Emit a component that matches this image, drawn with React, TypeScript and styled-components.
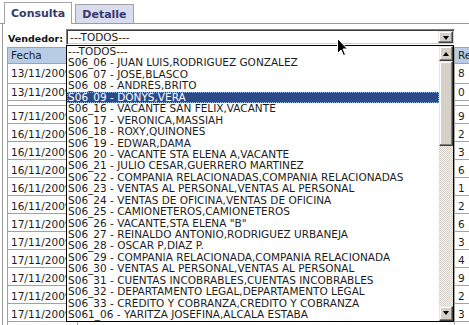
import React from "react";
import styled, { createGlobalStyle, css } from "styled-components";

const GlobalStyle = createGlobalStyle`
  html, body {
    margin: 0;
    padding: 0;
    background: #fff;
  }
  body {
    font-family: "DejaVu Sans", Verdana, sans-serif;
    color: #1a1a1a;
  }
`;

const Page = styled.div`
  position: relative;
  width: 469px;
  height: 325px;
  overflow: hidden;
  background: #fff;
`;

const TabBar = styled.div`
  display: flex;
  align-items: flex-end;
  gap: 3px;
  height: 23px;
  padding-left: 4px;
  border-bottom: 1px solid #9a9a9a;
  box-sizing: content-box;
`;

const Tab = styled.div<{ $active?: boolean }>`
  display: flex;
  align-items: center;
  padding: 0 6px;
  font-size: 11px;
  font-weight: bold;
  color: #36396f;
  border: 1px solid #a4a4a4;
  border-bottom: none;
  ${(p) =>
    p.$active
      ? css`
          height: 21px;
          margin-bottom: -1px;
          background: #fff;
        `
      : css`
          height: 18px;
          background: #d9dcec;
        `}
`;

const Panel = styled.div`
  margin-left: 2px;
  border-left: 1px solid #9a9a9a;
  padding: 5px 0 0 4px;
  height: 300px;
`;

const FilterRow = styled.div`
  display: flex;
  align-items: flex-end;
  gap: 3px;
  height: 16px;
  margin-bottom: 2px;
`;

const Label = styled.span`
  margin-left: 1px;
  font-size: 9.5px;
  font-weight: bold;
  color: #111;
  line-height: 13px;
`;

const SelectWrap = styled.div`
  position: relative;
  width: 389px;
  height: 16px;
`;

const SelectBox = styled.div`
  box-sizing: border-box;
  display: flex;
  align-items: center;
  height: 16px;
  border: 1px solid;
  border-color: #808080 #fff #fff #808080;
  box-shadow: inset 1px 1px #404040, inset -1px -1px #d4d0c8;
  padding: 0 1px 0 3px;
  font-size: 10.5px;
  background: #fff;
`;

const SelectText = styled.span`
  flex: 1;
`;

const raised = css`
  box-sizing: border-box;
  background: #d4d0c8;
  border: 1px solid;
  border-color: #e8e6e1 #404040 #404040 #e8e6e1;
  box-shadow: inset -1px -1px #808080, inset 1px 1px #fff;
`;

const Arrow = styled.span<{ $up?: boolean }>`
  width: 0;
  height: 0;
  border-left: 3.5px solid transparent;
  border-right: 3.5px solid transparent;
  ${(p) =>
    p.$up
      ? css`border-bottom: 4px solid #000;`
      : css`border-top: 4px solid #000;`}
`;

const DropButton = styled.div`
  ${raised};
  display: flex;
  align-items: center;
  justify-content: center;
  width: 15px;
  height: 12px;
  padding-top: 1px;
`;

const DropList = styled.div`
  position: absolute;
  left: 0;
  top: 16px;
  width: 388px;
  box-sizing: border-box;
  border: 1px solid #000;
  background: #fff;
  display: flex;
  z-index: 5;
`;

const Options = styled.div`
  flex: 1;
`;

const Option = styled.div<{ $selected?: boolean }>`
  height: 11.44px;
  line-height: 11.44px;
  padding-left: 1px;
  font-size: 10.5px;
  white-space: nowrap;
  overflow: hidden;
  color: #1c1c1c;
  ${(p) =>
    p.$selected &&
    css`
      background: #2d4a88;
      color: #fff;
      outline: 1px dotted #8fb4ec;
      outline-offset: -1px;
    `}
`;

const ScrollBar = styled.div`
  width: 14px;
  display: flex;
  flex-direction: column;
  background-color: #f2f1ee;
  background-image: conic-gradient(
    #d4d0c8 25%,
    #f4f3f0 0 50%,
    #d4d0c8 0 75%,
    #f4f3f0 0
  );
  background-size: 2px 2px;
`;

const ScrollButton = styled.div`
  ${raised};
  height: 15px;
  display: flex;
  align-items: center;
  justify-content: center;
`;

const Thumb = styled.div`
  ${raised};
  height: 85px;
`;

const Track = styled.div`
  flex: 1;
`;

const Grid = styled.table`
  border-collapse: separate;
  border-spacing: 0;
  table-layout: fixed;
  width: 507px;
  border-top: 1px solid #a2a2a2;
  border-left: 1px solid #a2a2a2;
  font-size: 10.5px;
`;

const HeadCell = styled.th`
  background: #b8cce6;
  font-weight: normal;
  text-align: left;
  color: #222;
  line-height: 15px;
  padding: 0 3px;
  border-right: 1px solid #a2a2a2;
  border-bottom: 1px solid #a2a2a2;
  white-space: nowrap;
  overflow: hidden;
`;

const Cell = styled.td<{ $pt: number; $pb: number }>`
  line-height: 14px;
  padding: ${(p) => `${p.$pt}px 2px ${p.$pb}px 3px`};
  border-right: 1px solid #a2a2a2;
  border-bottom: 1px solid #a2a2a2;
  white-space: nowrap;
  overflow: hidden;
  color: #1c1c1c;
`;

const SpacerCell = styled.td`
  height: 4px;
  padding: 0;
  line-height: 0;
  font-size: 0;
  border-right: 1px solid #a2a2a2;
  border-bottom: 1px solid #a2a2a2;
`;

const Cursor = styled.svg`
  position: absolute;
  left: 337px;
  top: 38px;
  z-index: 10;
`;

const options = [
  "---TODOS---",
  "S06_06 - JUAN LUIS,RODRIGUEZ GONZALEZ",
  "S06_07 - JOSE,BLASCO",
  "S06_08 - ANDRÉS,BRITO",
  "S06_09 - DONYS,VERA",
  "S06_16 - VACANTE SAN FELIX,VACANTE",
  "S06_17 - VERONICA,MASSIAH",
  "S06_18 - ROXY,QUIÑONES",
  "S06_19 - EDWAR,DAMA",
  "S06_20 - VACANTE STA ELENA A,VACANTE",
  "S06_21 - JULIO CESAR,GUERRERO MARTINEZ",
  "S06_22 - COMPAÑIA RELACIONADAS,COMPAÑIA RELACIONADAS",
  "S06_23 - VENTAS AL PERSONAL,VENTAS AL PERSONAL",
  "S06_24 - VENTAS DE OFICINA,VENTAS DE OFICINA",
  "S06_25 - CAMIONETEROS,CAMIONETEROS",
  'S06_26 - VACANTE,STA ELENA "B"',
  "S06_27 - REINALDO ANTONIO,RODRIGUEZ URBANEJA",
  "S06_28 - OSCAR P,DIAZ P.",
  "S06_29 - COMPAÑIA RELACIONADA,COMPAÑIA RELACIONADA",
  "S06_30 - VENTAS AL PERSONAL,VENTAS AL PERSONAL",
  "S06_31 - CUENTAS INCOBRABLES,CUENTAS INCOBRABLES",
  "S06_32 - DEPARTAMENTO LEGAL,DEPARTAMENTO LEGAL",
  "S06_33 - CRÉDITO Y COBRANZA,CRÉDITO Y COBRANZA",
  "S061_06 - YARITZA JOSEFINA,ALCALA ESTABA",
];

// the middle columns sit under the open drop-down, so they are left blank
type Row = { fecha: string; total: string; pt: number; pb: number };

const rows: Row[] = [
  { fecha: "13/11/2009", total: "8", pt: 2, pb: 3 },
  { fecha: "13/11/2009", total: "0", pt: 1, pb: 1 },
];

const laterRows: Row[] = [
  ["17/11/2009", "9"],
  ["16/11/2009", "2"],
  ["16/11/2009", "3"],
  ["16/11/2009", "6"],
  ["16/11/2009", "1"],
  ["16/11/2009", "2"],
  ["17/11/2009", "6"],
  ["17/11/2009", "3"],
  ["17/11/2009", "4"],
  ["17/11/2009", "9"],
  ["17/11/2009", "2"],
  ["17/11/2009", "3"],
  ["17/11/2009", "5"],
].map(([fecha, total]) => ({ fecha, total, pt: 3, pb: 0 }));

const DataRow: React.FC<{ row: Row }> = ({ row }) => (
  <tr>
    <Cell $pt={row.pt} $pb={row.pb}>{row.fecha}</Cell>
    <Cell $pt={row.pt} $pb={row.pb} />
    <Cell $pt={row.pt} $pb={row.pb}>{row.total}</Cell>
  </tr>
);

const App: React.FC = () => {
  return (
    <Page>
      <GlobalStyle />
      <TabBar>
        <Tab $active>Consulta</Tab>
        <Tab>Detalle</Tab>
      </TabBar>
      <Panel>
        <FilterRow>
          <Label>Vendedor:</Label>
          <SelectWrap>
            <SelectBox>
              <SelectText>---TODOS---</SelectText>
              <DropButton>
                <Arrow />
              </DropButton>
            </SelectBox>
            <DropList>
              <Options>
                {options.map((o, i) => (
                  <Option key={o} $selected={i === 4}>
                    {o}
                  </Option>
                ))}
              </Options>
              <ScrollBar>
                <ScrollButton>
                  <Arrow $up />
                </ScrollButton>
                <Thumb />
                <Track />
                <ScrollButton>
                  <Arrow />
                </ScrollButton>
              </ScrollBar>
            </DropList>
          </SelectWrap>
        </FilterRow>
        <Grid>
          <colgroup>
            <col style={{ width: 70 }} />
            <col style={{ width: 377 }} />
            <col style={{ width: 60 }} />
          </colgroup>
          <thead>
            <tr>
              <HeadCell>Fecha</HeadCell>
              <HeadCell />
              <HeadCell>Recibo</HeadCell>
            </tr>
          </thead>
          <tbody>
            {rows.map((r, i) => (
              <DataRow key={`a${i}`} row={r} />
            ))}
            <tr>
              <SpacerCell />
              <SpacerCell />
              <SpacerCell />
            </tr>
            {laterRows.map((r, i) => (
              <DataRow key={`b${i}`} row={r} />
            ))}
          </tbody>
        </Grid>
      </Panel>
      <Cursor width="12" height="19" viewBox="0 0 12 19">
        <path
          d="M0.5 0.5 L0.5 15.5 L4 12 L6.5 17.5 L8.5 16.5 L6 11 L10.5 11 Z"
          fill="#000"
          stroke="#fff"
          strokeWidth="1"
        />
      </Cursor>
    </Page>
  );
};

export default App;
